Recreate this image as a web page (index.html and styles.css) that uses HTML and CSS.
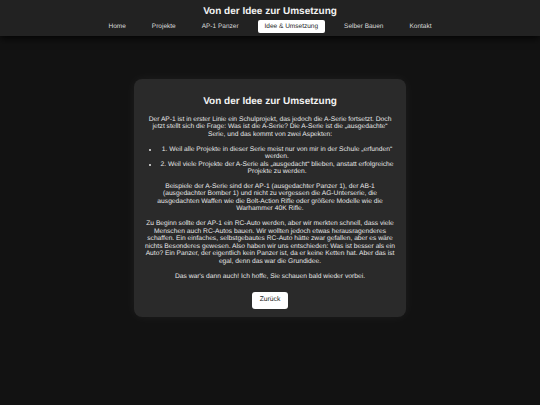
FILE: index.html
```html
<!DOCTYPE html>
<html lang="de">
<head>
<meta charset="utf-8">
<title>Von der Idee zur Umsetzung</title>
<link rel="stylesheet" href="styles.css">
</head>
<body>
<header class="site-header">
  <h1 class="site-title">Von der Idee zur Umsetzung</h1>
  <nav class="nav">
    <a class="nav-link" href="#">Home</a>
    <a class="nav-link" href="#">Projekte</a>
    <a class="nav-link" href="#">AP-1 Panzer</a>
    <a class="nav-link active" href="#">Idee &amp; Umsetzung</a>
    <a class="nav-link" href="#">Selber Bauen</a>
    <a class="nav-link" href="#">Kontakt</a>
  </nav>
</header>
<main class="main">
  <section class="card">
    <h2 class="card-title">Von der Idee zur Umsetzung</h2>
    <p class="text">Der AP-1 ist in erster Linie ein Schulprojekt, das jedoch die A-Serie fortsetzt. Doch jetzt stellt sich die Frage: Was ist die A-Serie? Die A-Serie ist die „ausgedachte“ Serie, und das kommt von zwei Aspekten:</p>
    <ul class="list">
      <li>1. Weil alle Projekte in dieser Serie meist nur von mir in der Schule „erfunden“ werden.</li>
      <li>2. Weil viele Projekte der A-Serie als „ausgedacht“ blieben, anstatt erfolgreiche Projekte zu werden.</li>
    </ul>
    <p class="text">Beispiele der A-Serie sind der AP-1 (ausgedachter Panzer 1), der AB-1 (ausgedachter Bomber 1) und nicht zu vergessen die AG-Unterserie, die ausgedachten Waffen wie die Bolt-Action Rifle oder größere Modelle wie die Warhammer 40K Rifle.</p>
    <p class="text">Zu Beginn sollte der AP-1 ein RC-Auto werden, aber wir merkten schnell, dass viele Menschen auch RC-Autos bauen. Wir wollten jedoch etwas herausragenderes schaffen. Ein einfaches, selbstgebautes RC-Auto hätte zwar gefallen, aber es wäre nichts Besonderes gewesen. Also haben wir uns entschieden: Was ist besser als ein Auto? Ein Panzer, der eigentlich kein Panzer ist, da er keine Ketten hat. Aber das ist egal, denn das war die Grundidee.</p>
    <p class="text">Das war's dann auch! Ich hoffe, Sie schauen bald wieder vorbei.</p>
    <div class="actions"><a class="button" href="#">Zurück</a></div>
  </section>
</main>
</body>
</html>
```
FILE: styles.css
```css
html, body {
  margin: 0;
  padding: 0;
}
body {
  background: #121212;
  color: #e8e8e8;
  font-family: "Liberation Sans", Arial, sans-serif;
  text-rendering: geometricPrecision;
  min-height: 405px;
}
.site-header {
  background: #222222;
  padding: 6px 0 3px;
  box-shadow: 0 2px 8px rgba(0, 0, 0, 0.9);
  text-align: center;
  position: relative;
}
.site-title {
  margin: 0 0 2px;
  font-size: 10px;
  line-height: 11.5px;
  font-weight: bold;
  color: #f2f2f2;
}
.nav {
  display: flex;
  justify-content: center;
  gap: 12px;
}
.nav-link {
  font-size: 6.5px;
  line-height: 7.5px;
  padding: 3.2px 7px;
  color: #dddddd;
  text-decoration: none;
  border-radius: 2px;
}
.nav-link.active {
  background: #ffffff;
  color: #222222;
}
.main {
  display: flex;
  justify-content: center;
  padding-top: 43px;
}
.card {
  width: 250px;
  padding: 17px 11px 8px;
  background: #2a2a2a;
  border-radius: 8px;
  box-shadow: 0 0 12px rgba(255, 255, 255, 0.05);
  text-align: center;
  font-size: 6.7px;
}
.card-title {
  margin: 0 0 7.8px;
  font-size: 10px;
  line-height: 11.5px;
  font-weight: bold;
  color: #f2f2f2;
}
.text {
  margin: 0 0 7.4px;
  line-height: 7.5px;
}
.list {
  margin: 0 0 7.4px;
  padding: 0 0 0 14px;
  line-height: 7.5px;
  text-align: center;
}
.actions {
  padding-top: 4.3px;
  display: flex;
  justify-content: center;
}
.button {
  display: block;
  background: #ffffff;
  color: #222222;
  text-decoration: none;
  font-size: 6.75px;
  line-height: 8px;
  padding: 4.5px 7.7px;
  border-radius: 3px;
}
```
